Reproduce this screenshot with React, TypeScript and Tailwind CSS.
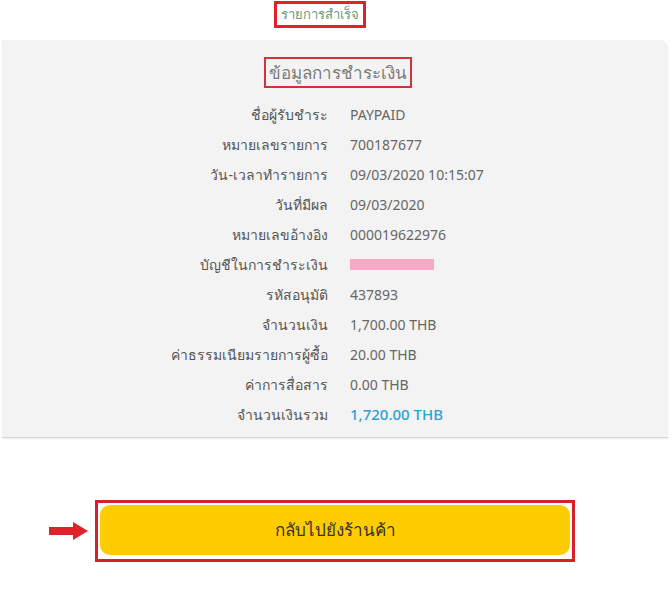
import React from "react";

const rows: { label: string; value: string; kind?: "mask" | "total" }[] = [
  { label: "ชื่อผู้รับชำระ", value: "PAYPAID" },
  { label: "หมายเลขรายการ", value: "700187677" },
  { label: "วัน-เวลาทำรายการ", value: "09/03/2020 10:15:07" },
  { label: "วันที่มีผล", value: "09/03/2020" },
  { label: "หมายเลขอ้างอิง", value: "000019622976" },
  { label: "บัญชีในการชำระเงิน", value: "", kind: "mask" },
  { label: "รหัสอนุมัติ", value: "437893" },
  { label: "จำนวนเงิน", value: "1,700.00 THB" },
  { label: "ค่าธรรมเนียมรายการผู้ซื้อ", value: "20.00 THB" },
  { label: "ค่าการสื่อสาร", value: "0.00 THB" },
  { label: "จำนวนเงินรวม", value: "1,720.00 THB", kind: "total" },
];

function App() {
  return (
    <div className="w-[672px] h-[595px] bg-white font-['Noto_Sans',sans-serif] overflow-hidden">
      <div className="flex justify-center pt-[1px] pr-[32px]">
        <div className="border-[3px] border-[#e0202a] w-[92px] h-[27px] flex items-center justify-center text-[13px] text-[#6b9a7c] whitespace-nowrap">
          รายการสำเร็จ
        </div>
      </div>

      <div className="mt-[12px] mx-[2px] w-[666px] h-[398px] bg-[#f3f3f3] rounded-tr-[8px] border-b border-[#d6d6d6] shadow-[0_1px_2px_rgba(0,0,0,0.08)] pt-[17px]">
        <div className="flex justify-center pl-[6px]">
          <div className="border-2 border-[#d6313a] w-[148px] h-[31px] flex items-center justify-center text-[17px] text-[#7a7a7a] whitespace-nowrap">
            ข้อมูลการชำระเงิน
          </div>
        </div>

        <div className="mt-[11px] flex flex-col">
          {rows.map((r) => (
            <div key={r.label} className="h-[30px] flex items-center">
              <div className="w-[326px] text-right text-[14px] text-[#555]">{r.label}</div>
              <div className="pl-[22px] text-[14px] text-[#666]">
                {r.kind === "mask" ? (
                  <div className="w-[84px] h-[11px] bg-[#f7aac6]" />
                ) : r.kind === "total" ? (
                  <span className="text-[15px] font-medium text-[#2ea0d8]">{r.value}</span>
                ) : (
                  r.value
                )}
              </div>
            </div>
          ))}
        </div>
      </div>

      <div className="mt-[62px] flex items-center">
        <svg width="40" height="18" viewBox="0 0 40 18" className="ml-[49px] mr-[6px]">
          <path d="M0 5 H24 V0 L39 9 L24 18 V13 H0 Z" fill="#e0202a" />
        </svg>
        <div className="border-[3px] border-[#d6202a] p-[2px] w-[480px] h-[62px]">
          <button className="w-[470px] h-[50px] rounded-[10px] bg-[#ffcc00] text-[17px] text-[#333] flex items-center justify-center">
            กลับไปยังร้านค้า
          </button>
        </div>
      </div>
    </div>
  );
}

export default App;
